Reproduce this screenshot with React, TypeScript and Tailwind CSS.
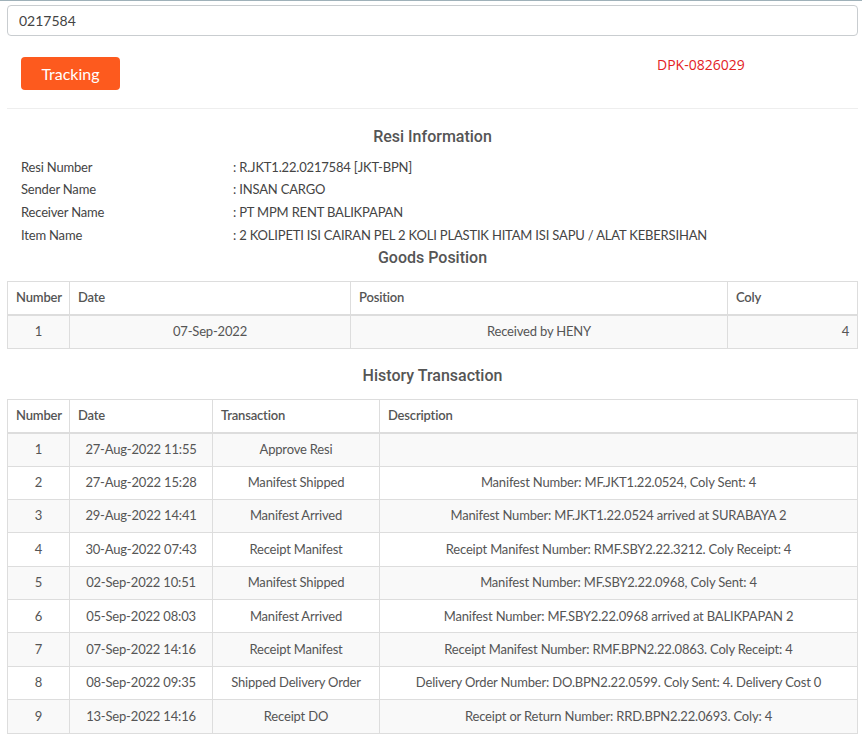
const goods = [{ no: 1, date: '07-Sep-2022', position: 'Received by HENY', coly: 4 }];

const history = [
  ['27-Aug-2022 11:55', 'Approve Resi', ''],
  ['27-Aug-2022 15:28', 'Manifest Shipped', 'Manifest Number: MF.JKT1.22.0524, Coly Sent: 4'],
  ['29-Aug-2022 14:41', 'Manifest Arrived', 'Manifest Number: MF.JKT1.22.0524 arrived at SURABAYA 2'],
  ['30-Aug-2022 07:43', 'Receipt Manifest', 'Receipt Manifest Number: RMF.SBY2.22.3212. Coly Receipt: 4'],
  ['02-Sep-2022 10:51', 'Manifest Shipped', 'Manifest Number: MF.SBY2.22.0968, Coly Sent: 4'],
  ['05-Sep-2022 08:03', 'Manifest Arrived', 'Manifest Number: MF.SBY2.22.0968 arrived at BALIKPAPAN 2'],
  ['07-Sep-2022 14:16', 'Receipt Manifest', 'Receipt Manifest Number: RMF.BPN2.22.0863. Coly Receipt: 4'],
  ['08-Sep-2022 09:35', 'Shipped Delivery Order', 'Delivery Order Number: DO.BPN2.22.0599. Coly Sent: 4. Delivery Cost 0'],
  ['13-Sep-2022 14:16', 'Receipt DO', 'Receipt or Return Number: RRD.BPN2.22.0693. Coly: 4'],
];

const info = [
  ['Resi Number', ': R.JKT1.22.0217584 [JKT-BPN]'],
  ['Sender Name', ': INSAN CARGO'],
  ['Receiver Name', ': PT MPM RENT BALIKPAPAN'],
  ['Item Name', ': 2 KOLIPETI ISI CAIRAN PEL 2 KOLI PLASTIK HITAM ISI SAPU / ALAT KEBERSIHAN'],
];

const th = 'border border-[#ddd] border-b-2 px-2 text-left font-semibold';
const td = 'border border-[#ddd] px-2 h-[33.4px] py-0';

function Title({ children }: { children: React.ReactNode }) {
  return (
    <h3 className="text-center text-[16px] font-medium text-[#555] leading-[22px] tracking-normal font-['Roboto',sans-serif]">
      {children}
    </h3>
  );
}

export default function App() {
  return (
    <div className="min-h-screen bg-white font-['Lato','Liberation_Sans',sans-serif] text-[13px] text-[#555] tracking-[-0.18px]">
      <div className="h-[1px] bg-[#9fb1b9]" />
      <div className="ml-[7px] mr-[4px] pt-[4px]">
        <input
          defaultValue="0217584"
          className="block w-full h-[31px] rounded-[4px] border border-[#c9cdd0] px-[11px] text-[14px] text-[#444] tracking-normal outline-none"
        />

        <div className="flex items-start pt-[21px] pb-[18px]">
          <button
            type="button"
            className="ml-[14px] h-[33px] w-[99px] rounded-[4px] bg-[#fd5a1e] text-[16px] text-white tracking-normal"
          >
            Tracking
          </button>
          <span className="ml-[537px] mt-[-3px] text-[14px] tracking-normal text-[#e3211f] font-['Open_Sans',sans-serif]">
            DPK-0826029
          </span>
        </div>

        <div className="h-px bg-[#eee]" />

        <div className="pt-[17px]">
          <Title>Resi Information</Title>
        </div>

        <div className="mt-[8px] px-[14px] text-[#444]">
          {info.map(([label, value]) => (
            <div key={label} className="flex h-[22.7px] items-center">
              <span className="w-[212px] shrink-0">{label}</span>
              <span>{value}</span>
            </div>
          ))}
        </div>

        <Title>Goods Position</Title>

        <table className="mt-[12px] w-full border-collapse table-fixed">
          <colgroup>
            <col className="w-[62px]" />
            <col className="w-[281px]" />
            <col className="w-[377px]" />
            <col />
          </colgroup>
          <thead>
            <tr>
              <th className={`${th} h-[34px]`}>Number</th>
              <th className={`${th} h-[34px]`}>Date</th>
              <th className={`${th} h-[34px]`}>Position</th>
              <th className={`${th} h-[34px]`}>Coly</th>
            </tr>
          </thead>
          <tbody>
            {goods.map((g) => (
              <tr key={g.no} className="bg-[#f9f9f9]">
                <td className={`${td} text-center`}>{g.no}</td>
                <td className={`${td} text-center`}>{g.date}</td>
                <td className={`${td} text-center`}>{g.position}</td>
                <td className={`${td} text-right`}>{g.coly}</td>
              </tr>
            ))}
          </tbody>
        </table>

        <div className="pt-[16px] pb-[12px]">
          <Title>History Transaction</Title>
        </div>

        <table className="w-full border-collapse table-fixed">
          <colgroup>
            <col className="w-[62px]" />
            <col className="w-[143px]" />
            <col className="w-[167px]" />
            <col />
          </colgroup>
          <thead>
            <tr>
              <th className={`${th} h-[33px]`}>Number</th>
              <th className={`${th} h-[33px]`}>Date</th>
              <th className={`${th} h-[33px]`}>Transaction</th>
              <th className={`${th} h-[33px]`}>Description</th>
            </tr>
          </thead>
          <tbody>
            {history.map(([date, trx, desc], i) => (
              <tr key={i} className={i % 2 === 0 ? 'bg-[#f9f9f9]' : 'bg-white'}>
                <td className={`${td} text-center`}>{i + 1}</td>
                <td className={`${td} text-center`}>{date}</td>
                <td className={`${td} text-center`}>{trx}</td>
                <td className={`${td} text-center`}>{desc}</td>
              </tr>
            ))}
          </tbody>
        </table>
      </div>
    </div>
  );
}
